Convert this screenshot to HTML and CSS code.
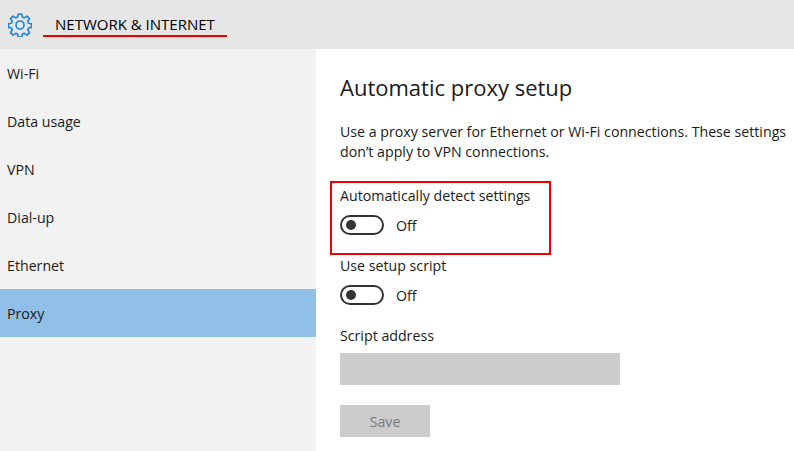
FILE: index.html
```html
<!DOCTYPE html>
<html lang="en">
<head>
<meta charset="utf-8">
<title>Network &amp; Internet</title>
<link rel="stylesheet" href="styles.css">
</head>
<body>
<header class="topbar">
  <svg class="gear" viewBox="0 0 24 24" width="24" height="24" fill="none" stroke="#1a84dc" stroke-width="1.6" stroke-linejoin="round">
    <circle cx="12" cy="12" r="4"/>
    <path d="M10.2 1h3.6l.6 3.1 1.9.8 2.7-1.8 2.5 2.5-1.8 2.7.8 1.9 3 .6v3.6l-3 .6-.8 1.9 1.8 2.7-2.5 2.5-2.7-1.8-1.9.8-.6 3h-3.6l-.6-3-1.9-.8-2.7 1.8-2.5-2.5 1.8-2.7-.8-1.9-3-.6v-3.6l3-.6.8-1.9-1.8-2.7 2.5-2.5 2.7 1.8 1.9-.8z"/>
  </svg>
  <h1 class="heading">NETWORK &amp; INTERNET</h1>
  <span class="underline"></span>
</header>
<div class="body">
  <nav class="sidebar">
    <a class="navitem">Wi-Fi</a>
    <a class="navitem">Data usage</a>
    <a class="navitem">VPN</a>
    <a class="navitem">Dial-up</a>
    <a class="navitem">Ethernet</a>
    <a class="navitem active">Proxy</a>
  </nav>
  <main class="content">
    <h2 class="title">Automatic proxy setup</h2>
    <p class="desc">Use a proxy server for Ethernet or Wi-Fi connections. These settings don’t apply to VPN connections.</p>
    <div class="setting first">
      <div class="label">Automatically detect settings</div>
      <div class="toggle-row"><span class="toggle"><span class="knob"></span></span><span class="state">Off</span></div>
      <span class="highlight"></span>
    </div>
    <div class="setting">
      <div class="label">Use setup script</div>
      <div class="toggle-row"><span class="toggle"><span class="knob"></span></span><span class="state">Off</span></div>
    </div>
    <div class="label address">Script address</div>
    <div class="input"></div>
    <button class="save" type="button">Save</button>
  </main>
</div>
</body>
</html>
```
FILE: styles.css
```css
* { box-sizing: border-box; }
html, body { margin: 0; height: 451px; overflow: hidden; }
body {
  width: 794px;
  background: #fff;
  color: #1a1a1a;
  font-family: "Open Sans", "Noto Sans", "Liberation Sans", sans-serif;
  font-size: 14.2px;
}
.topbar {
  position: relative;
  height: 49px;
  background: #e6e6e6;
  display: flex;
  align-items: center;
  padding-left: 8px;
}
.gear { flex: none; margin-top: 1px; }
.heading {
  margin: 0 0 0 23px;
  font-size: 15px;
  font-weight: 400;
  line-height: 20px;
  padding-bottom: 1px;
  color: #000;
}
.underline {
  position: absolute;
  left: 43px;
  top: 35px;
  width: 184px;
  height: 2px;
  background: #f00000;
}
.body { display: flex; height: 402px; }
.sidebar { width: 316px; background: #f2f2f2; display: flex; flex-direction: column; }
.navitem {
  height: 48px;
  display: flex;
  align-items: center;
  padding-left: 7px;
}
.navitem.active { background: #90c0e8; }
.content { flex: 1; padding-left: 24px; min-width: 0; }
.title {
  margin: 0;
  padding-top: 22px;
  font-size: 22px;
  font-weight: 400;
  line-height: 32px;
  color: #1a1a1a;
}
.desc {
  margin: 19px 0 0;
  width: 454px;
  line-height: 20px;
}
.setting { position: relative; height: 70px; }
.setting.first { margin-top: 24px; }
.label { line-height: 20px; }
.toggle-row { display: flex; align-items: center; margin-top: 9px; height: 20px; }
.toggle {
  width: 44px;
  height: 20px;
  border: 2px solid #333;
  border-radius: 10px;
  display: flex;
  align-items: center;
  padding-left: 4px;
}
.knob { width: 10px; height: 10px; border-radius: 50%; background: #333; }
.state { margin-left: 12px; }
.highlight {
  position: absolute;
  left: -10px;
  top: -5px;
  width: 221px;
  height: 74px;
  border: 2px solid #f00000;
}
.input { width: 280px; height: 32px; margin-top: 7px; background: #cccccc; }
.save {
  display: block;
  width: 90px;
  height: 32px;
  margin-top: 20px;
  border: 0;
  padding: 0;
  background: #cccccc;
  color: #7a7a7a;
  font: inherit;
}
```
